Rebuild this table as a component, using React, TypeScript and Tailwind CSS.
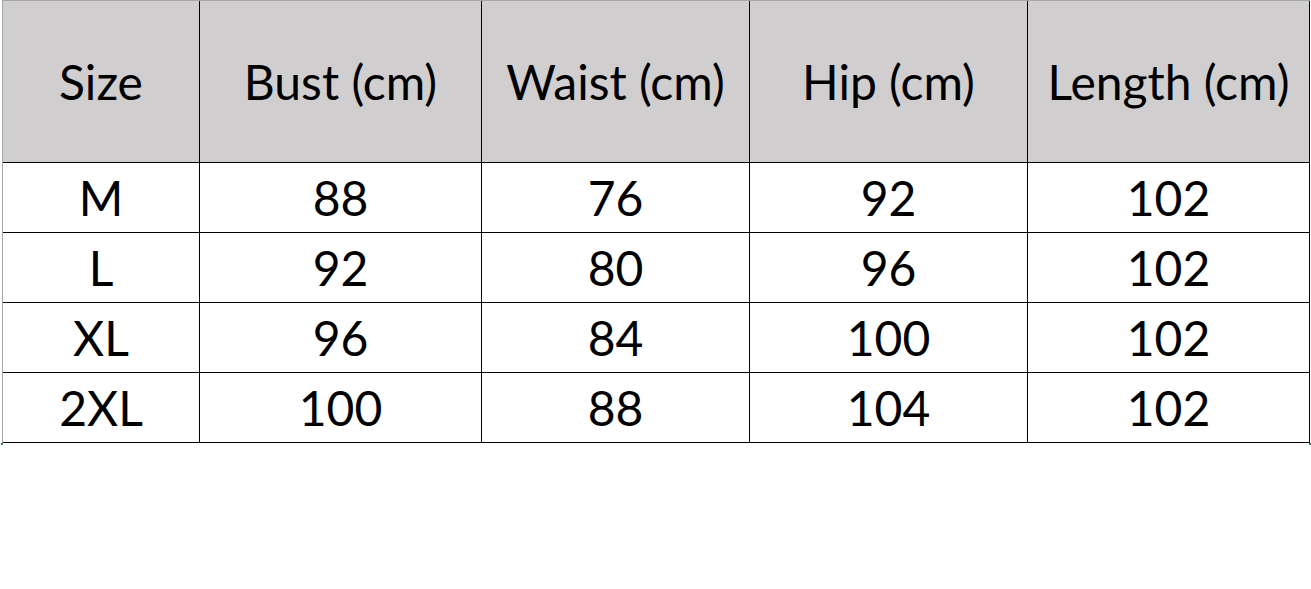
import React from 'react';

const headers = ['Size', 'Bust (cm)', 'Waist (cm)', 'Hip (cm)', 'Length (cm)'];

const rows = [
  ['M', '88', '76', '92', '102'],
  ['L', '92', '80', '96', '102'],
  ['XL', '96', '84', '100', '102'],
  ['2XL', '100', '88', '104', '102'],
];

const App: React.FC = () => {
  return (
    <div className="w-[1311px] h-[589px] bg-white" style={{ fontFamily: 'Lato, "Open Sans", sans-serif' }}>
      <div className="relative ml-[2px] inline-grid grid-cols-[197px_282px_268px_278px_282px] border-l border-t border-l-[#a6a6a6] border-t-[#a6a6a6] text-black text-[48px]">
        {headers.map((h) => (
          <div
            key={h}
            className="h-[162px] flex items-center justify-center bg-[#d0cece] border-r border-b border-black"
          >
            {h}
          </div>
        ))}
        {rows.map((r, i) =>
          r.map((c, j) => (
            <div
              key={`${i}-${j}`}
              className="h-[70px] flex items-center justify-center border-r border-b border-black"
            >
              {c}
            </div>
          ))
        )}
        {/* excel selection handles */}
        <span className="absolute -left-[2px] -bottom-[2px] w-[2px] h-[2px] bg-[#3f7a52]" />
        <span className="absolute -right-[1px] -bottom-[2px] w-[2px] h-[2px] bg-[#3f7a52]" />
      </div>
    </div>
  );
};

export default App;
